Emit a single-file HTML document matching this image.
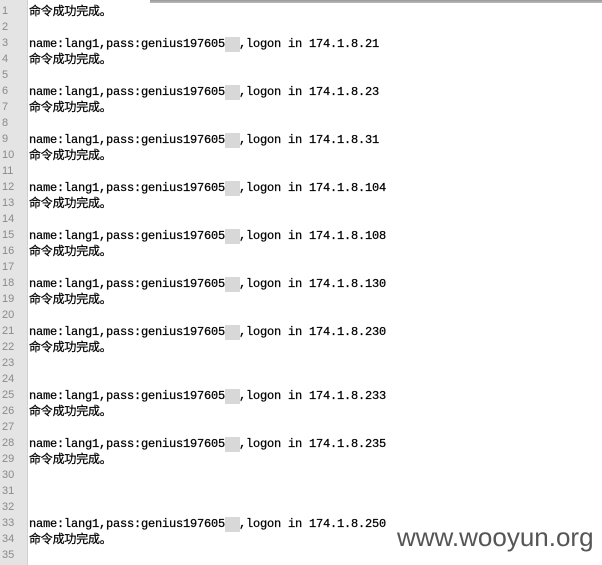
<!DOCTYPE html><html><head><style>
body{margin:0;width:602px;height:565px;background:#fff;position:relative;overflow:hidden}
.g{position:absolute;left:0;top:0;width:27px;height:565px;background:#e4e4e4;border-right:1px solid #d0d0d0}
.top{position:absolute;left:150px;top:0;width:452px;height:3px;background:linear-gradient(#999,#bbb)}
.r{position:absolute;left:0;height:16px;width:602px}
.n{position:absolute;left:2px;top:0;width:20px;line-height:16px;font:11px/16px "Liberation Sans",sans-serif;color:#8a8a8a}
.t{position:absolute;left:29px;top:1px;white-space:pre;font:12px/16px "Liberation Mono","Noto Sans CJK SC",monospace;letter-spacing:-0.2px;color:#000;-webkit-text-stroke:0.25px #000}
.b{position:absolute;left:225px;top:2px;width:15px;height:15px;background:#d8d8d8}
.w{position:absolute;left:397px;top:522px;font:26px "Liberation Sans",sans-serif;color:#555}
</style></head><body><div class="g"></div><div class="top"></div>
<div id="c"></div>
<div class="w">www.wooyun.org</div>
<script>
var L={1:'c',3:'21',4:'c',6:'23',7:'c',9:'31',10:'c',12:'104',13:'c',15:'108',16:'c',18:'130',19:'c',21:'230',22:'c',25:'233',26:'c',28:'235',29:'c',33:'250',34:'c'};
var h='';
for(var i=1;i<=35;i++){var y=3+(i-1)*16;h+='<div class="r" style="top:'+y+'px"><span class="n">'+i+'</span>';
var v=L[i];if(v=='c')h+='<span class="t">命令成功完成。</span>';else if(v)h+='<span class="t">name:lang1,pass:genius197605  ,logon in 174.1.8.'+v+'</span><span class="b"></span>';
h+='</div>';}
document.getElementById('c').innerHTML=h;
</script></body></html>
